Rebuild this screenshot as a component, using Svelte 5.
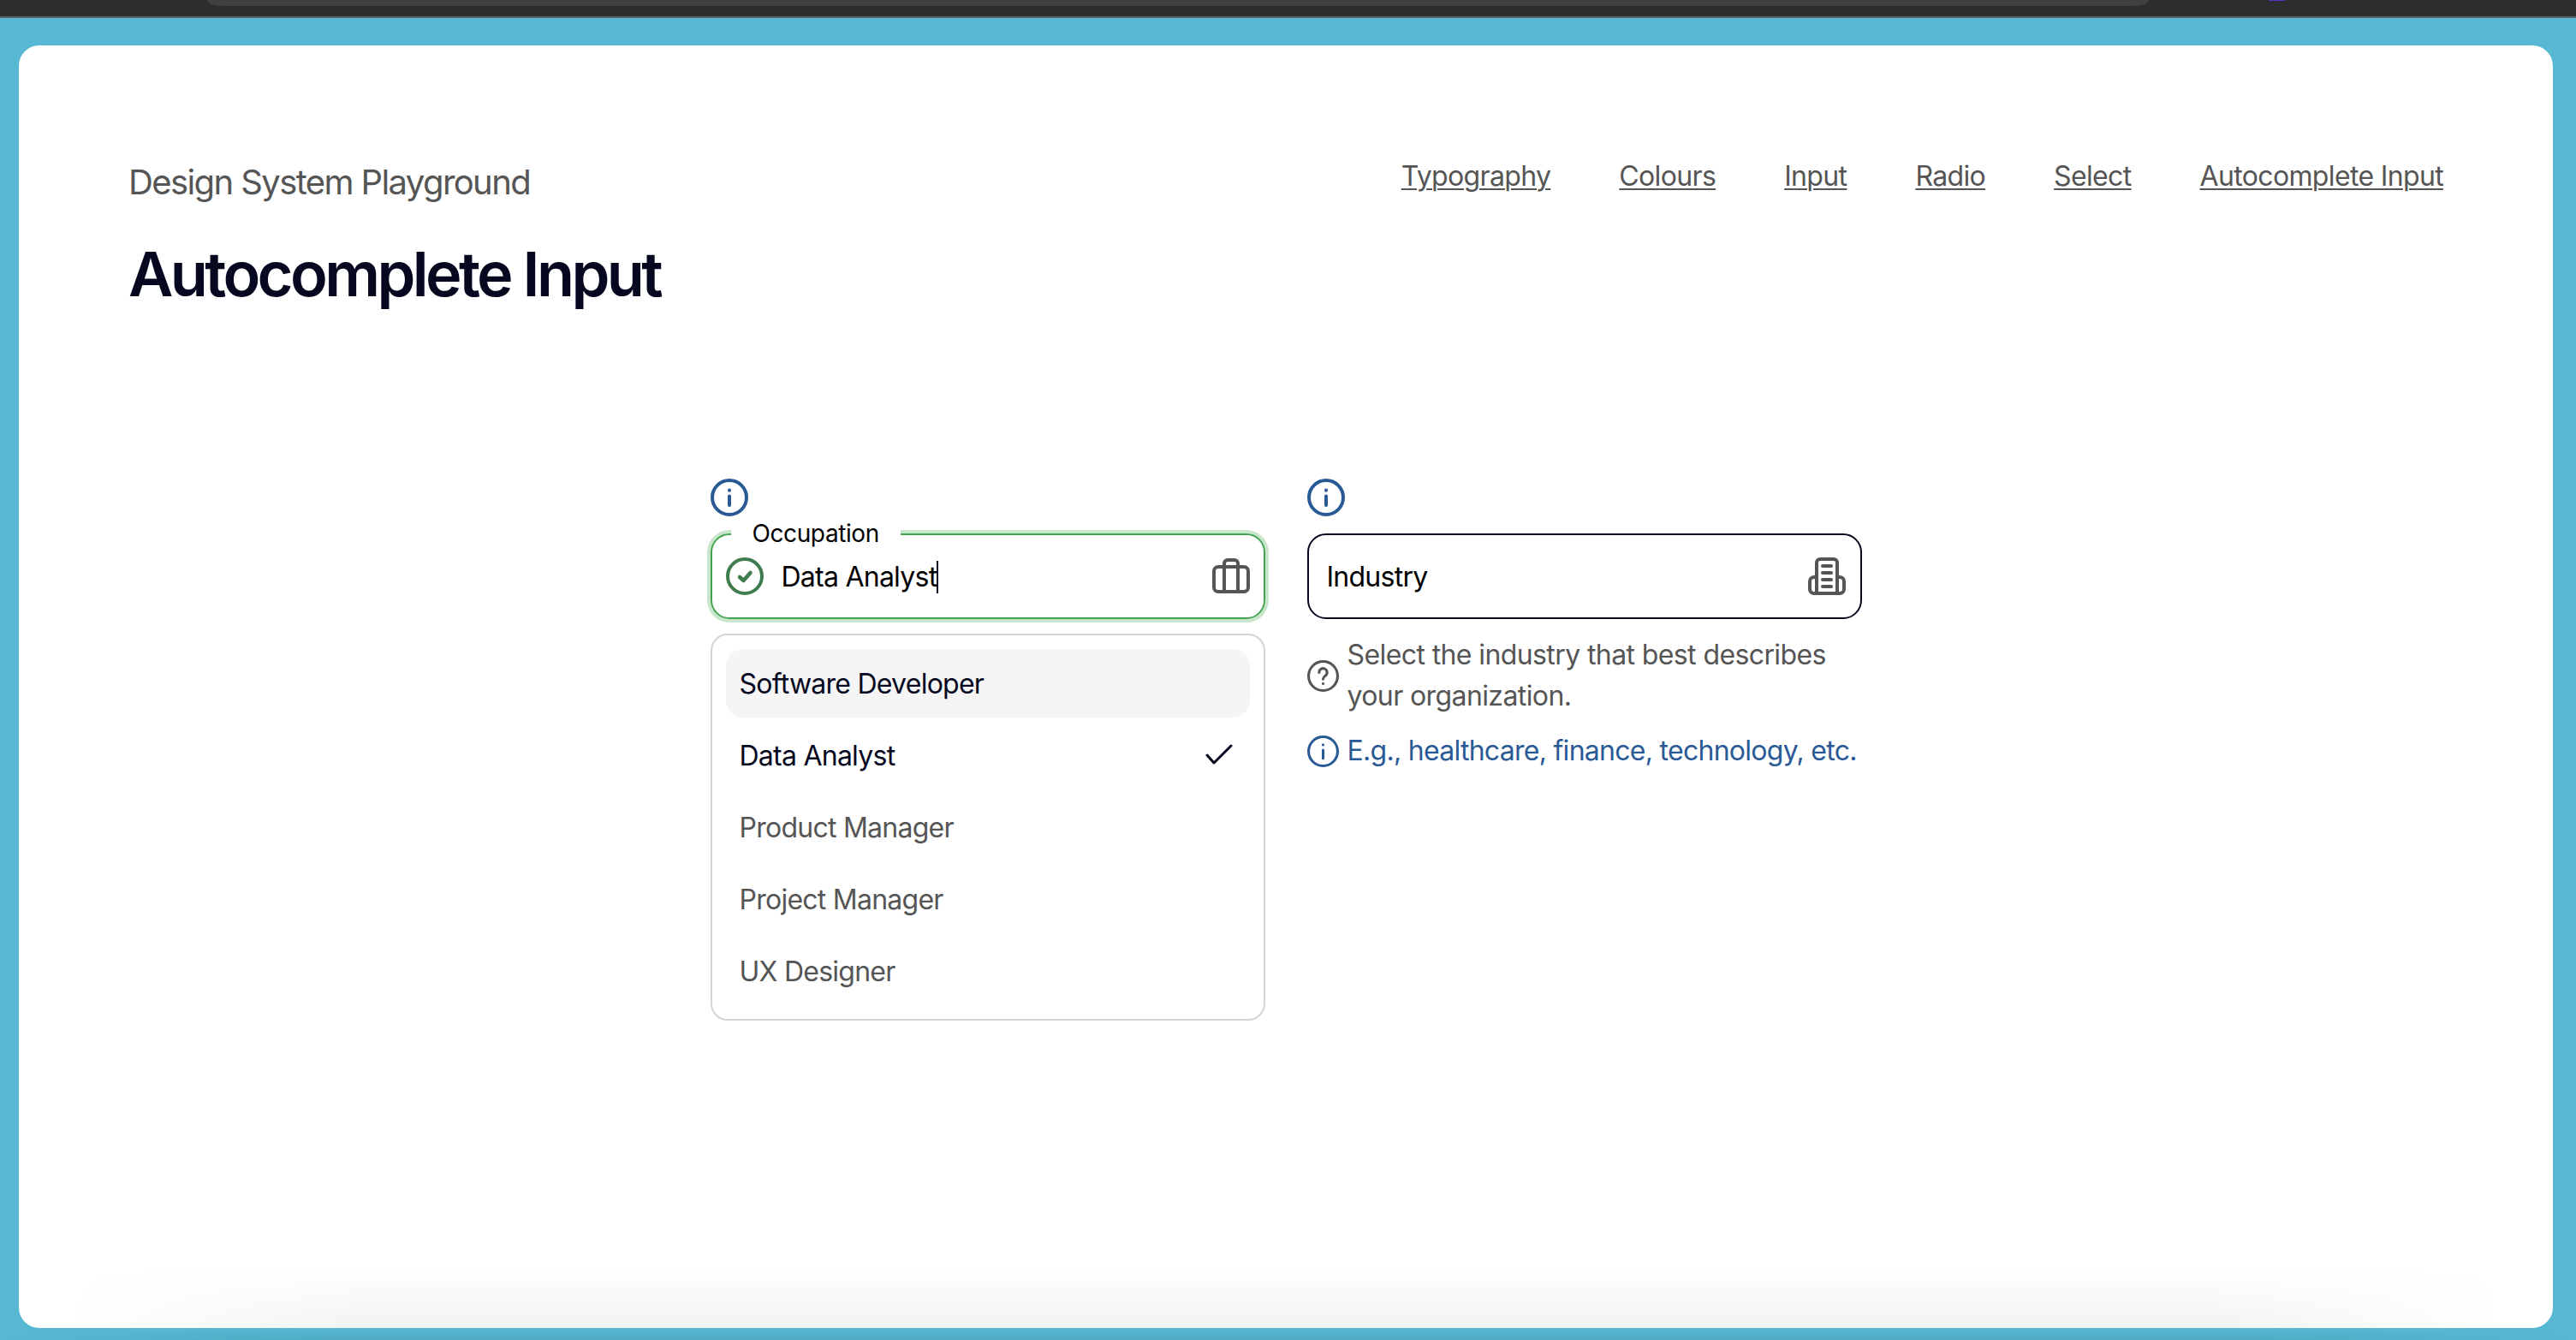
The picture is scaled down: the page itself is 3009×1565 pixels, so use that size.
<script lang="ts">
  const links = ['Typography', 'Colours', 'Input', 'Radio', 'Select', 'Autocomplete Input'];
  const options = ['Software Developer', 'Data Analyst', 'Product Manager', 'Project Manager', 'UX Designer'];
  const hovered = 'Software Developer';
  const selected = 'Data Analyst';
</script>

<div class="window-bar">
  <div class="url-pill"></div>
  <div class="tab-dot"></div>
</div>

<div class="stage">
  <main class="card">
    <header class="page-header">
      <div class="titles">
        <p class="eyebrow">Design System Playground</p>
        <h1>Autocomplete Input</h1>
      </div>
      <nav class="nav">
        {#each links as link}
          <a href="#top">{link}</a>
        {/each}
      </nav>
    </header>

    <section class="fields">
      <div class="field">
        <svg class="info" viewBox="0 0 44 44" aria-hidden="true">
          <circle cx="22" cy="22" r="20" />
          <path d="M22 20.5V31" />
          <path d="M22 13.5v.2" />
        </svg>
        <div class="input-box success">
          <span class="float-label">Occupation</span>
          <svg class="icon status" viewBox="0 0 44 44" aria-hidden="true">
            <circle cx="22" cy="22" r="20" />
            <path class="status-check" d="M16 23l4.5 4 8-9" />
          </svg>
          <span class="value">Data Analyst<i class="caret"></i></span>
          <svg class="icon trailing" viewBox="0 0 44 44" aria-hidden="true">
            <rect x="2" y="11" width="40" height="29" rx="5" />
            <path d="M14 40V7a4 4 0 0 1 4-4h8a4 4 0 0 1 4 4v33" />
          </svg>
        </div>
        <ul class="dropdown">
          {#each options as option}
            <li class="option" class:hovered={option === hovered} class:selected={option === selected}>
              {option}
              {#if option === selected}
                <svg class="tick" viewBox="0 0 36 36" aria-hidden="true">
                  <path d="M2 18l8 9L30 7" />
                </svg>
              {/if}
            </li>
          {/each}
        </ul>
      </div>

      <div class="field">
        <svg class="info" viewBox="0 0 44 44" aria-hidden="true">
          <circle cx="22" cy="22" r="20" />
          <path d="M22 20.5V31" />
          <path d="M22 13.5v.2" />
        </svg>
        <div class="input-box plain">
          <span class="value">Industry</span>
          <svg class="icon trailing" viewBox="0 0 44 44" aria-hidden="true">
            <path d="M10 42V6a4 4 0 0 1 4-4h16a4 4 0 0 1 4 4v36" />
            <path d="M10 23H7a5 5 0 0 0-5 5v9a5 5 0 0 0 5 5h30a5 5 0 0 0 5-5v-9a5 5 0 0 0-5-5h-3" />
            <path d="M17 10h10M17 18h10M17 26h10M17 34h10" />
          </svg>
        </div>
        <div class="hints">
          <div class="hint">
            <svg class="hint-icon" viewBox="0 0 36 36" aria-hidden="true">
              <circle cx="18" cy="18" r="16.5" />
              <path d="M13.5 14a4.5 4.5 0 1 1 7 3.7c-1.6 1.1-2.5 2-2.5 3.8" />
              <path d="M18 26.5v.2" />
            </svg>
            <span>Select the industry that best describes your organization.</span>
          </div>
          <div class="hint info-hint">
            <svg class="hint-icon" viewBox="0 0 36 36" aria-hidden="true">
              <circle cx="18" cy="18" r="16.5" />
              <path d="M18 16.5V26" />
              <path d="M18 10.5v.2" />
            </svg>
            <span>E.g., healthcare, finance, technology, etc.</span>
          </div>
        </div>
      </div>
    </section>
  </main>
</div>

<style>
  :global(body) {
    margin: 0;
    height: 1565px;
    overflow: hidden;
    font-family: Inter, "Liberation Sans", sans-serif;
    background:
      linear-gradient(to right, #56b8d2, transparent 400px) left bottom / 400px 14px no-repeat,
      linear-gradient(to left, #56b8d2, transparent 400px) right bottom / 400px 14px no-repeat,
      linear-gradient(to top, #4eaac3, #56b8d2 14px);
  }

  .window-bar {
    display: flex;
    height: 19px;
    background: #2d2d2d;
    border-bottom: 2px solid #5f5f5f;
  }

  .url-pill {
    width: 2268px;
    height: 7px;
    margin-left: 242px;
    background: #404040;
    border-radius: 0 0 18px 18px / 0 0 7px 7px;
  }

  .tab-dot {
    width: 19px;
    height: 1px;
    margin-left: 140px;
    background: #5b2fc9;
  }

  .stage {
    display: flex;
    height: 1544px;
    padding: 32px 27px 14px 22px;
    box-sizing: border-box;
  }

  .card {
    flex: 1;
    padding: 130px 128px 0;
    border-radius: 24px;
    background:
      linear-gradient(to right, #fff 60px, transparent 420px) left bottom / 420px 80px no-repeat,
      linear-gradient(to left, #fff 60px, transparent 420px) right bottom / 420px 80px no-repeat,
      linear-gradient(to top, #f2f2f3, #fff 70px);
  }

  .page-header {
    display: flex;
    justify-content: space-between;
    align-items: flex-start;
  }

  .eyebrow {
    margin: 0 0 33px;
    font-size: 40px;
    line-height: 60px;
    letter-spacing: -1.6px;
    color: #555;
  }

  h1 {
    margin: 0;
    font-size: 72px;
    line-height: 88px;
    font-weight: 600;
    letter-spacing: -3.6px;
    color: #05081e;
  }

  .nav {
    display: flex;
    gap: 80px;
    margin-top: -1px;
  }

  .nav a {
    font-size: 32px;
    line-height: 48px;
    letter-spacing: -0.65px;
    color: #555;
    text-decoration: underline;
    text-decoration-thickness: 2px;
    text-underline-offset: 3px;
  }

  .fields {
    display: flex;
    justify-content: center;
    gap: 49px;
    margin-top: 195px;
  }

  .field {
    width: 648px;
  }

  .info {
    display: block;
    width: 44px;
    height: 44px;
    margin-bottom: 20px;
    fill: none;
    stroke: #2a5a96;
    stroke-width: 4;
    stroke-linecap: round;
  }

  .input-box {
    position: relative;
    display: flex;
    align-items: center;
    height: 100px;
    box-sizing: border-box;
    border-radius: 22px;
    font-size: 32px;
    letter-spacing: -0.75px;
    color: #000;
  }

  .success {
    padding: 0 16px;
    border: 2px solid #45a34f;
    box-shadow: 0 0 0 4px #c8e6cc;
  }

  .plain {
    padding: 0 17px 0 21px;
    border: 2px solid #05081e;
  }

  .float-label {
    position: absolute;
    top: -19px;
    left: 22px;
    padding: 0 25px;
    font-size: 28px;
    line-height: 34px;
    letter-spacing: -0.4px;
    background: #fff;
  }

  .icon {
    flex: none;
    width: 44px;
    height: 44px;
    fill: none;
    stroke: #555;
    stroke-width: 4;
    stroke-linecap: round;
    stroke-linejoin: round;
  }

  .status {
    margin-right: 21px;
    stroke: #3f7d4e;
  }

  .status-check {
    stroke-width: 4.5;
  }

  .trailing {
    margin-left: auto;
  }

  .value {
    display: inline-flex;
    align-items: center;
    padding-top: 2px;
    line-height: 48px;
  }

  .caret {
    width: 2px;
    height: 38px;
    background: #05081e;
  }

  .dropdown {
    margin: 17px 0 0;
    padding: 16px;
    list-style: none;
    display: flex;
    flex-direction: column;
    gap: 4px;
    border: 2px solid #d4d4d4;
    border-radius: 20px;
  }

  .option {
    display: flex;
    justify-content: space-between;
    align-items: center;
    height: 80px;
    padding: 0 16px;
    border-radius: 20px;
    font-size: 32px;
    letter-spacing: -0.75px;
    color: #555;
  }

  .hovered {
    background: #f5f5f5;
    color: #05081e;
  }

  .selected {
    color: #05081e;
  }

  .tick {
    width: 36px;
    height: 36px;
    fill: none;
    stroke: #05081e;
    stroke-width: 3;
    stroke-linecap: round;
    stroke-linejoin: round;
  }

  .hints {
    display: flex;
    flex-direction: column;
    gap: 16px;
    margin-top: 18px;
  }

  .hint {
    display: flex;
    align-items: center;
    gap: 10px;
    font-size: 32px;
    line-height: 48px;
    letter-spacing: -0.6px;
    color: #555;
  }

  .hint-icon {
    flex: none;
    width: 37px;
    height: 37px;
    fill: none;
    stroke: currentColor;
    stroke-width: 3;
    stroke-linecap: round;
  }

  .info-hint {
    color: #2a5a96;
    letter-spacing: -0.72px;
    white-space: nowrap;
  }
</style>
